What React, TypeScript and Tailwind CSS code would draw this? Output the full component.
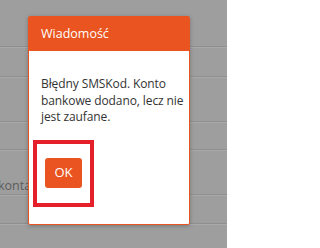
const ROWS = [46, 28, 43, 26, 43, 27]

export default function App() {
  return (
    <div className="relative w-[227px] h-[248px] overflow-hidden bg-[#9e9e9e] font-['Open_Sans',sans-serif]">
      {/* page behind the overlay */}
      <div className="flex flex-col">
        {ROWS.map((h, i) => (
          <div key={i} className="flex flex-col">
            <div className="relative" style={{ height: h }}>
              {i === 4 && (
                <span className="absolute left-[-2px] top-[26px] text-[12.5px] text-[#5c5c5c]">konta</span>
              )}
            </div>
            <div className="h-[2px] border-t border-[#8f8f8f] border-b border-b-[#a9a9a9]" />
          </div>
        ))}
      </div>

      {/* dialog */}
      <div className="absolute left-[28px] top-[16px] w-[162px] h-[209px] bg-white border border-[#e95420] rounded-[2px] shadow-[0_1px_4px_rgba(0,0,0,0.25)] flex flex-col">
        <div className="h-[34px] bg-[#e95420] flex items-center px-[12px] text-[12.5px] text-white">
          Wiadomość
        </div>
        <div className="pl-[12px] pr-[4px] pt-[25px] text-[12px] leading-[16.5px] tracking-[-0.1px] text-[#333333]">
          Błędny SMSKod. Konto bankowe dodano, lecz nie jest zaufane.
        </div>
        <div className="mt-[14px] ml-[4px] w-[61px] h-[67px] border-[4px] border-[#e5202a] flex items-center justify-center">
          <button className="w-[37px] h-[30px] rounded-[3px] bg-[#e95420] text-white text-[13px] font-medium">
            OK
          </button>
        </div>
      </div>
    </div>
  )
}
